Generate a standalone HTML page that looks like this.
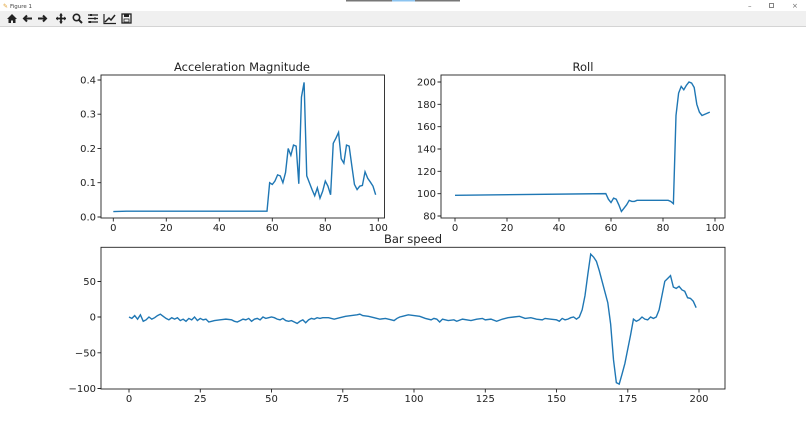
<!DOCTYPE html>
<html><head><style>
html,body{margin:0;padding:0;width:806px;height:435px;overflow:hidden;background:#fff;font-family:"DejaVu Sans","Liberation Sans",sans-serif}
</style></head><body>
<svg width="806" height="435" viewBox="0 0 806 435" xmlns="http://www.w3.org/2000/svg" font-family="DejaVu Sans, Liberation Sans, sans-serif">
<rect x="0" y="0" width="806" height="11" fill="#fff"/>
<rect x="346" y="0" width="114" height="1.5" fill="#777"/>
<rect x="392" y="0" width="23" height="1.5" fill="#8cc4f0"/>
<text x="3" y="8" font-size="6" fill="#e0a030">✎</text>
<text x="10" y="8" font-size="5.5" fill="#444">Figure 1</text>
<text x="748" y="8" font-size="7" fill="#666">–</text>
<rect x="769.5" y="3.5" width="4" height="4" fill="none" stroke="#666" stroke-width="0.8"/>
<text x="792" y="8" font-size="7" fill="#666">×</text>
<rect x="0" y="11" width="806" height="15" fill="#f0f0f0"/>
<rect x="0" y="26" width="806" height="1" fill="#d4d4d4"/>
<!-- toolbar icons -->
<g fill="#222" stroke="#222">
<path d="M7 19 L12 14 L17 19 L15.5 19 L15.5 23 L13 23 L13 20.5 L11 20.5 L11 23 L8.5 23 L8.5 19Z" stroke="none"/>
<path d="M32 18.5 H24 M27 15.5 L24 18.5 L27 21.5" fill="none" stroke-width="2"/>
<path d="M38 18.5 H46 M43 15.5 L46 18.5 L43 21.5" fill="none" stroke-width="2"/>
<path d="M56 18.5 H66 M61 13.5 V23.5" fill="none" stroke-width="1.8"/>
<path d="M56 18.5 l2-2 v4z M66 18.5 l-2-2 v4z M61 13.5 l-2 2 h4z M61 23.5 l-2-2 h4z" stroke="none"/>
<circle cx="76.5" cy="17.5" r="3.2" fill="none" stroke-width="1.6"/>
<path d="M78.8 19.8 L82 23" stroke-width="2"/>
<path d="M88 15 H98 M88 18.5 H98 M88 22 H98" stroke-width="1.2"/>
<path d="M91 14 v2 M95 17.5 v2 M90 21 v2" stroke-width="2"/>
<path d="M104 14 V23.5 H116" fill="none" stroke-width="1.2"/>
<path d="M105 22 L109 18 L111 20 L115 15" fill="none" stroke-width="1.5"/>
<rect x="122" y="14" width="9" height="9" fill="none" stroke-width="1.3"/>
<rect x="124" y="14" width="5" height="3" stroke="none"/>
<rect x="124" y="19" width="5" height="3" fill="#f0f0f0" stroke-width="0.8"/>
</g>

<g font-size="10" fill="#222">
<!-- Plot 1 -->
<text x="242" y="71" font-size="11.5" text-anchor="middle">Acceleration Magnitude</text>
<rect x="101" y="75" width="283.5" height="143" fill="none" stroke="#222" stroke-width="0.9"/>
<g stroke="#222" stroke-width="0.9">
<path d="M113.3 218v3.5M166.3 218v3.5M219.3 218v3.5M272.3 218v3.5M325.3 218v3.5M378.3 218v3.5"/>
<path d="M101 217h-3.5M101 182.7h-3.5M101 148.4h-3.5M101 114.2h-3.5M101 80h-3.5"/>
</g>
<g text-anchor="middle">
<text x="113.3" y="231">0</text><text x="166.3" y="231">20</text><text x="219.3" y="231">40</text><text x="272.3" y="231">60</text><text x="325.3" y="231">80</text><text x="378.3" y="231">100</text>
</g>
<g text-anchor="end">
<text x="96" y="220.5">0.0</text><text x="96" y="186.2">0.1</text><text x="96" y="152">0.2</text><text x="96" y="117.7">0.3</text><text x="96" y="83.5">0.4</text>
</g>
<g transform="translate(113.3,217) scale(2.65,-342.5)">
<polyline vector-effect="non-scaling-stroke" fill="none" stroke="#1f77b4" stroke-width="1.4" points="0,0.016 5,0.017 58,0.017 59,0.10 60,0.095 61,0.105 62,0.123 63,0.12 64,0.10 65,0.13 66,0.20 67,0.18 68,0.21 69,0.207 70,0.097 71,0.35 72,0.393 73,0.12 74,0.10 75,0.08 76,0.062 77,0.085 78,0.055 79,0.075 80,0.105 81,0.09 82,0.065 83,0.215 84,0.23 85,0.247 86,0.17 87,0.157 88,0.21 89,0.207 90,0.15 91,0.095 92,0.08 93,0.09 94,0.092 95,0.132 96,0.113 97,0.102 98,0.09 99,0.065"/>
</g>

<!-- Plot 2 -->
<text x="583" y="71" font-size="11.5" text-anchor="middle">Roll</text>
<rect x="441" y="75" width="284" height="143" fill="none" stroke="#222" stroke-width="0.9"/>
<g stroke="#222" stroke-width="0.9">
<path d="M455 218v3.5M507 218v3.5M559 218v3.5M611 218v3.5M663 218v3.5M715 218v3.5"/>
<path d="M441 216h-3.5M441 193.7h-3.5M441 171.3h-3.5M441 149h-3.5M441 126.7h-3.5M441 104.3h-3.5M441 82h-3.5"/>
</g>
<g text-anchor="middle">
<text x="455" y="231">0</text><text x="507" y="231">20</text><text x="559" y="231">40</text><text x="611" y="231">60</text><text x="663" y="231">80</text><text x="715" y="231">100</text>
</g>
<g text-anchor="end">
<text x="436" y="219.5">80</text><text x="436" y="197.2">100</text><text x="436" y="174.8">120</text><text x="436" y="152.5">140</text><text x="436" y="130.2">160</text><text x="436" y="107.8">180</text><text x="436" y="85.5">200</text>
</g>
<g transform="translate(455,305.3) scale(2.6,-1.1167)">
<polyline vector-effect="non-scaling-stroke" fill="none" stroke="#1f77b4" stroke-width="1.4" points="0,98.5 58,100 59,95 60,92 61,96 62,95 63,90 64,84 65,87 66,90 67,94 68,93 69,93 70,94 82,94 83,93 84,91 85,170 86,190 87,196 88,193 89,197 90,200 91,199 92,195 93,180 94,173 95,170 96,171 97,172 98,173"/>
</g>

<!-- Plot 3 -->
<text x="413" y="243" font-size="11.5" text-anchor="middle">Bar speed</text>
<rect x="101" y="247.3" width="624" height="141.7" fill="none" stroke="#222" stroke-width="0.9"/>
<g stroke="#222" stroke-width="0.9">
<path d="M129 389v3.5M200.3 389v3.5M271.5 389v3.5M342.8 389v3.5M414 389v3.5M485.3 389v3.5M556.5 389v3.5M627.8 389v3.5M699 389v3.5"/>
<path d="M101 281.5h-3.5M101 317h-3.5M101 352.8h-3.5M101 388.5h-3.5"/>
</g>
<g text-anchor="middle">
<text x="129" y="402">0</text><text x="200.3" y="402">25</text><text x="271.5" y="402">50</text><text x="342.8" y="402">75</text><text x="414" y="402">100</text><text x="485.3" y="402">125</text><text x="556.5" y="402">150</text><text x="627.8" y="402">175</text><text x="699" y="402">200</text>
</g>
<g text-anchor="end">
<text x="96" y="285">50</text><text x="96" y="320.5">0</text><text x="96" y="356.3">−50</text><text x="96" y="392">−100</text>
</g>
<g transform="translate(129,317) scale(2.85,-0.714)">
<polyline vector-effect="non-scaling-stroke" fill="none" stroke="#1f77b4" stroke-width="1.4" points="0,0 1,-2 2,2 3,-3 4,3 5,-6 6,-4 7,0 8,-3 9,-1 10,2 11,4 12,1 13,-2 14,-4 15,-1 16,-3 17,-1 18,-5 19,-3 20,-6 21,-2 22,-4 23,0 24,-5 25,-2 26,-4 27,-3 28,-7 29,-6 30,-5 32,-4 34,-3 36,-4 37,-6 38,-7 39,-5 40,-3 41,-4 42,-2 43,-6 44,-3 45,-2 46,-4 47,0 48,-2 49,-1 50,0 51,-1 52,-3 53,-4 54,-2 55,-5 56,-6 57,-5 58,-7 59,-9 60,-6 61,-4 62,-8 63,-4 64,-2 65,-3 66,-1 67,-2 68,-1 70,-1 72,-3 74,-1 76,1 78,2 80,3 81,4 82,2 84,1 86,-1 88,-3 90,-2 92,-4 93,-5 94,-2 95,0 96,1 97,2 98,3 100,2 102,1 104,-2 106,-4 107,-2 108,-3 109,-7 110,-3 112,-5 114,-4 115,-6 117,-3 120,-5 122,-3 124,-2 125,-4 127,-3 129,-6 131,-3 133,-1 135,0 137,1 139,-2 141,-1 143,-3 145,-4 146,-2 148,-3 150,-4 151,-6 152,-2 153,-4 154,-3 155,-1 156,0 157,-3 158,0 159,10 160,30 161,60 162,88 163,84 164,78 165,65 166,50 167,35 168,20 169,-10 170,-60 171,-92 172,-94 173,-80 174,-65 175,-45 176,-25 177,-3 178,-6 179,-4 180,0 181,-3 182,-4 183,0 184,-2 185,0 186,10 187,30 188,50 189,54 190,58 191,42 192,40 193,43 194,38 195,36 196,27 197,26 198,22 199,13"/>
</g>
</g>
</svg>
</body></html>
